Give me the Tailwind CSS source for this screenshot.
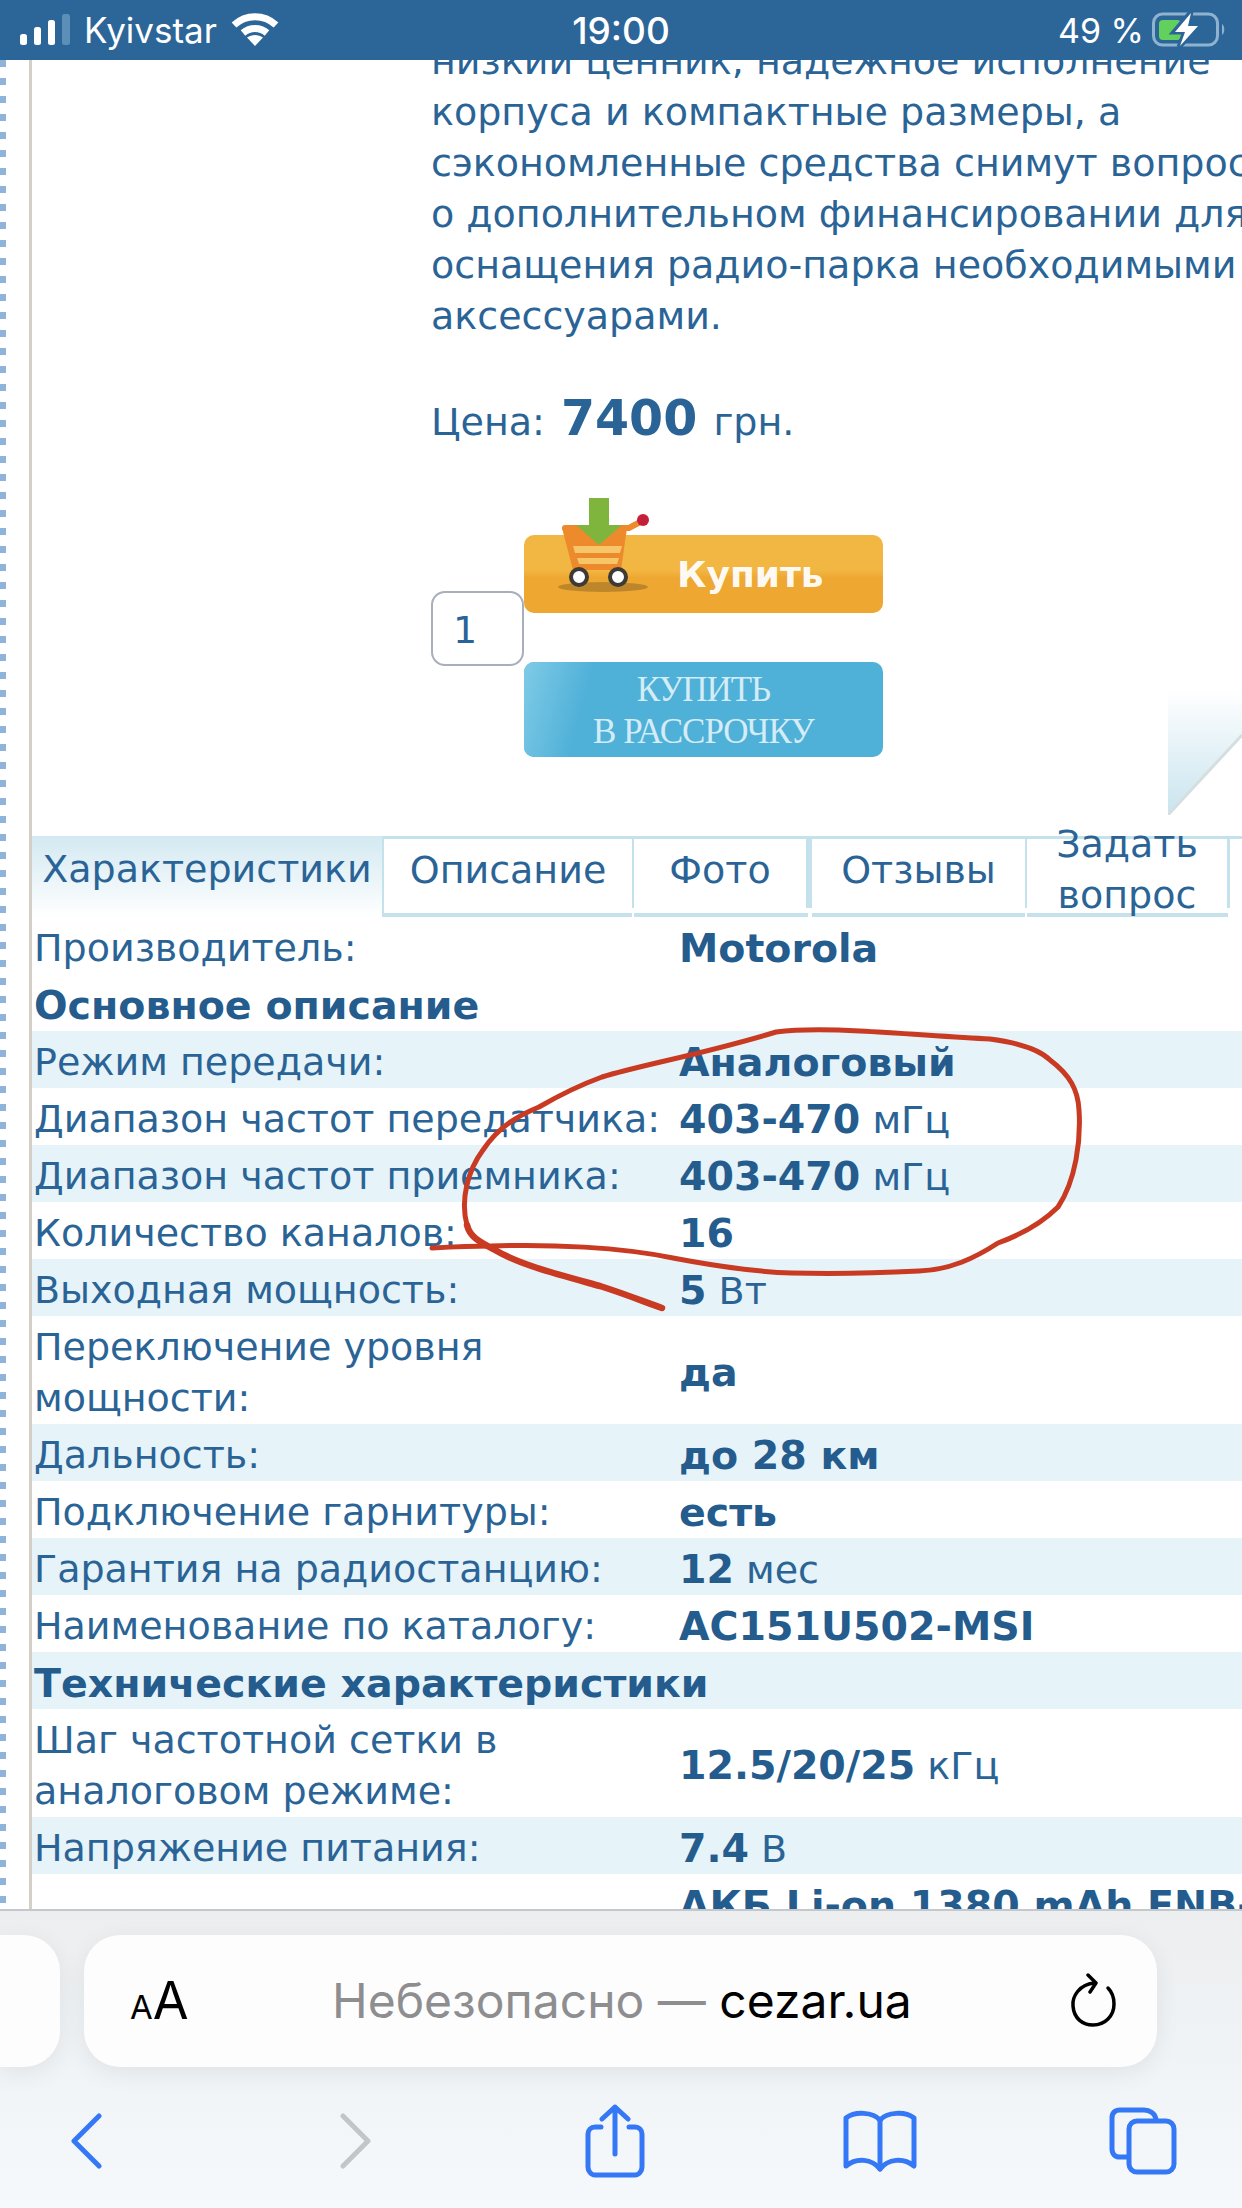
<!DOCTYPE html>
<html lang="ru">
<head>
  <meta charset="UTF-8" />
  <meta name="viewport" content="width=device-width, initial-scale=1.0" />
  <title>cezar.ua</title>
  <script src="https://cdn.jsdelivr.net/npm/@tailwindcss/browser@4"></script>
</head>

<body class="relative w-[1242px] h-[2208px] overflow-hidden flex flex-col bg-white font-['DejaVu_Sans',sans-serif] text-[38px] leading-[51px] text-[#2a6496]">

  <!-- iOS status bar -->
  <header class="h-[60px] shrink-0 bg-[#2c6698] text-white flex items-center justify-between pl-[20px] pr-[16px] font-['Inter',sans-serif] z-10">
    <div class="flex items-center w-[300px]">
      <svg width="52" height="32" viewBox="0 0 52 32" fill="#fff">
        <rect x="0" y="20" width="7" height="11" rx="2.5" />
        <rect x="14" y="13" width="7" height="18" rx="2.5" />
        <rect x="28" y="6" width="7" height="25" rx="2.5" />
        <rect x="42" y="0" width="8" height="31" rx="2.5" fill="#5c8fb8" />
      </svg>
      <span class="ml-[12px] text-[35px] leading-[40px]">Kyivstar</span>
      <svg class="ml-[14px]" width="48" height="34" viewBox="0 0 48 34" fill="none" stroke="#fff" stroke-width="7">
        <path d="M3 12C15 1 33 1 45 12" />
        <path d="M12 20C19 14 29 14 36 20" />
        <path d="M16 24.500L24 33L32 24.500C27 21 21 21 16 24.500Z" fill="#fff" stroke="none" />
      </svg>
    </div>
    <div class="text-[37px] font-medium -ml-[4px]">19:00</div>
    <div class="flex items-center justify-end w-[300px]">
      <span class="text-[34px] mr-[8px]">49 %</span>
      <svg width="74" height="36" viewBox="0 0 74 36" fill="none">
        <rect x="1.500" y="2" width="64" height="31" rx="9" stroke="#8fb3cf" stroke-width="3" />
        <path d="M70 12C73 14 73 21 70 23Z" fill="#8fb3cf" />
        <rect x="7" y="8" width="22" height="20" rx="4" fill="#62d05c" />
        <path d="M39 0L22 20H33L27 35L47 14H36Z" fill="#2c6698" stroke="#2c6698" stroke-width="5" />
        <path d="M39 1L23 20H33L28 34L46 14H36Z" fill="#fff" />
      </svg>
    </div>
  </header>

  <!-- Page -->
  <main class="flex h-[1851px] shrink-0 overflow-hidden border-b-2 border-[#c4c7cb]">
    <div class="w-[29px] shrink-0 bg-white">
      <div class="w-[6px] h-full bg-[repeating-linear-gradient(#8fb3d9_0,#8fb3d9_7px,#fff_7px,#fff_18px)]"></div>
    </div>

    <div class="flex-1 min-w-0 border-l-[3px] border-[#d4d0c8] overflow-hidden">
      <div class="-mt-[24px]">

        <!-- Product text -->
        <div class="pl-[399px] whitespace-nowrap">
          <p>
            низкий ценник, надежное исполнение<br />
            корпуса и компактные размеры, а<br />
            сэкономленные средства снимут вопрос<br />
            о дополнительном финансировании для<br />
            оснащения радио-парка необходимыми<br />
            аксессуарами.
          </p>
          <p class="mt-[51px]">Цена: <b class="text-[49px] mx-[4px]">7400</b> грн.</p>
        </div>

        <!-- Buy buttons -->
        <div class="relative h-[388px] pl-[399px] pt-[87px] flex items-start">
          <div class="w-[93px] h-[75px] mt-[56px] shrink-0 border-2 border-[#a9aebd] rounded-[14px] pl-[20px] leading-[74px]">1</div>
          <div class="w-[359px] shrink-0">
            <div class="relative h-[78px] rounded-[10px] bg-[linear-gradient(#f2b742,#f2b742_45%,#eea731_55%,#eea731)] flex items-center pl-[153px] text-[36px] font-bold text-white/95">
              Купить
              <!-- cart -->
              <svg class="absolute left-[5px] -top-[45px]" width="150" height="120" viewBox="0 0 150 120">
                <ellipse cx="74" cy="97" rx="45" ry="5" fill="#a9772a" opacity="0.7" />
                <path d="M36 38L100 38L115 30" fill="none" stroke="#ec8a2c" stroke-width="6" stroke-linecap="round" />
                <path d="M33 38H98L92 80H44Z" fill="#ec8a2c" />
                <path d="M44 56H93L91 63H46Z" fill="#f7c668" />
                <path d="M48 68H90L88 74H50Z" fill="#f7c668" />
                <circle cx="114" cy="30" r="6" fill="#c4203a" />
                <circle cx="50" cy="87" r="8" fill="#fff" stroke="#3e3a36" stroke-width="4" />
                <circle cx="89" cy="87" r="8" fill="#fff" stroke="#3e3a36" stroke-width="4" />
                <path d="M60 8H80V35H93L70 55L47 35H60Z" fill="#80b53d" />
              </svg>
            </div>
            <div class="relative mt-[49px] h-[95px] pt-[2px] rounded-[10px] bg-[#4fb0d8] overflow-hidden flex flex-col items-center justify-center font-['Liberation_Serif',serif] text-[35px] leading-[42px] tracking-[-1px] text-[#d3ecf5]">
              <div class="absolute left-0 top-0 w-[70px] h-full bg-[linear-gradient(105deg,#7fcbe6,#4fb0d8_75%)]"></div>
              <span class="relative">КУПИТЬ</span>
              <span class="relative">В РАССРОЧКУ</span>
            </div>
          </div>
          <!-- corner of a picture cut off by the right edge -->
          <svg class="absolute right-0 top-[242px]" width="74" height="125" viewBox="0 0 74 125">
            <defs>
              <linearGradient id="corner" x1="0" y1="0" x2="0" y2="1">
                <stop offset="0" stop-color="#fff" />
                <stop offset="1" stop-color="#c9e4ee" />
              </linearGradient>
            </defs>
            <path d="M0 0H74V45L0 125Z" fill="url(#corner)" />
            <path d="M0 125L74 45" stroke="#d5dfdf" stroke-width="3" />
          </svg>
        </div>

        <!-- Tabs -->
        <nav class="flex h-[81px] whitespace-nowrap">
          <div class="w-[352px] h-full border-r-2 border-[#c5e1ec] bg-[linear-gradient(#d3e9f1,#fff)] flex items-center justify-center pb-[14px]">Характеристики</div>
          <div class="w-[250px]">
            <div class="h-[72px] pb-[4px] border-r-2 border-[#c5e1ec] flex items-center justify-center bg-[linear-gradient(#c5e1ec,#c5e1ec)] bg-no-repeat bg-[0_9px] bg-[size:100%_3px]">Описание</div>
            <div class="h-[4px] mt-[5px] mr-[2px] bg-[#c5e1ec]"></div>
          </div>
          <div class="w-[178px]">
            <div class="h-[72px] pb-[4px] border-r-[6px] border-[#c5e1ec] flex items-center justify-center bg-[linear-gradient(#c5e1ec,#c5e1ec)] bg-no-repeat bg-[0_9px] bg-[size:100%_3px]">Фото</div>
            <div class="h-[4px] mt-[5px] mr-[4px] bg-[#c5e1ec]"></div>
          </div>
          <div class="w-[215px]">
            <div class="h-[72px] pb-[4px] border-r-2 border-[#c5e1ec] flex items-center justify-center bg-[linear-gradient(#c5e1ec,#c5e1ec)] bg-no-repeat bg-[0_9px] bg-[size:100%_3px]">Отзывы</div>
            <div class="h-[4px] mt-[5px] mr-[2px] bg-[#c5e1ec]"></div>
          </div>
          <div class="w-[203px]">
            <div class="h-[72px] pb-[4px] border-r-[3px] border-[#c5e1ec] flex items-center justify-center text-center bg-[linear-gradient(#c5e1ec,#c5e1ec)] bg-no-repeat bg-[0_9px] bg-[size:100%_3px]">Задать<br />вопрос</div>
            <div class="h-[4px] mt-[5px] mr-[2px] bg-[#c5e1ec]"></div>
          </div>
          <div class="flex-1 h-[72px] bg-[linear-gradient(#c5e1ec,#c5e1ec)] bg-no-repeat bg-[0_60px] bg-[size:100%_3px]"></div>
        </nav>

        <!-- Spec table -->
        <div class="whitespace-nowrap text-[#2a6496] [&_b]:text-[#255c8e] [&_b]:text-[39.5px]">
          <div class="flex h-[57px] pt-[6px] items-center pl-[2px]"><div class="w-[645px] shrink-0">Производитель:</div><div><b>Motorola</b></div></div>
          <div class="flex h-[57px] pt-[6px] items-center pl-[2px]"><b>Основное описание</b></div>
          <div class="flex h-[57px] pt-[6px] items-center pl-[2px] bg-[#e6f3f8]"><div class="w-[645px] shrink-0">Режим передачи:</div><div><b>Аналоговый</b></div></div>
          <div class="flex h-[57px] pt-[6px] items-center pl-[2px]"><div class="w-[645px] shrink-0">Диапазон частот передатчика:</div><div><b>403-470</b> мГц</div></div>
          <div class="flex h-[57px] pt-[6px] items-center pl-[2px] bg-[#e6f3f8]"><div class="w-[645px] shrink-0">Диапазон частот приемника:</div><div><b>403-470</b> мГц</div></div>
          <div class="flex h-[57px] pt-[6px] items-center pl-[2px]"><div class="w-[645px] shrink-0">Количество каналов:</div><div><b>16</b></div></div>
          <div class="flex h-[57px] pt-[6px] items-center pl-[2px] bg-[#e6f3f8]"><div class="w-[645px] shrink-0">Выходная мощность:</div><div><b>5</b> Вт</div></div>
          <div class="flex h-[108px] pt-[6px] items-center pl-[2px]"><div class="w-[645px] shrink-0">Переключение уровня<br />мощности:</div><div><b>да</b></div></div>
          <div class="flex h-[57px] pt-[6px] items-center pl-[2px] bg-[#e6f3f8]"><div class="w-[645px] shrink-0">Дальность:</div><div><b>до 28 км</b></div></div>
          <div class="flex h-[57px] pt-[6px] items-center pl-[2px]"><div class="w-[645px] shrink-0">Подключение гарнитуры:</div><div><b>есть</b></div></div>
          <div class="flex h-[57px] pt-[6px] items-center pl-[2px] bg-[#e6f3f8]"><div class="w-[645px] shrink-0">Гарантия на радиостанцию:</div><div><b>12</b> мес</div></div>
          <div class="flex h-[57px] pt-[6px] items-center pl-[2px]"><div class="w-[645px] shrink-0">Наименование по каталогу:</div><div><b>AC151U502-MSI</b></div></div>
          <div class="flex h-[57px] pt-[6px] items-center pl-[2px] bg-[#e6f3f8]"><b>Технические характеристики</b></div>
          <div class="flex h-[108px] pt-[6px] items-center pl-[2px]"><div class="w-[645px] shrink-0">Шаг частотной сетки в<br />аналоговом режиме:</div><div><b>12.5/20/25</b> кГц</div></div>
          <div class="flex h-[57px] pt-[6px] items-center pl-[2px] bg-[#e6f3f8]"><div class="w-[645px] shrink-0">Напряжение питания:</div><div><b>7.4</b> В</div></div>
          <div class="flex h-[57px] pt-[6px] items-center pl-[2px]"><div class="w-[645px] shrink-0"></div><div><b>АКБ Li-on 1380 mAh FNB-V</b></div></div>
        </div>
      </div>
    </div>
  </main>

  <!-- Safari bottom bar -->
  <footer class="flex-1 bg-[linear-gradient(#eceef0,#f0f3f5_45%,#f6f9fb)] font-['Inter',sans-serif]">
    <div class="flex gap-[24px] pt-[24px]">
      <div class="w-[60px] h-[132px] shrink-0 rounded-r-[36px] bg-[#fdfdfe] shadow-[0_6px_24px_rgba(0,0,0,0.07)]"></div>
      <div class="w-[1073px] h-[132px] rounded-[36px] bg-[#fdfdfe] shadow-[0_6px_24px_rgba(0,0,0,0.07)] flex items-center pl-[46px] pr-[40px]">
        <div class="w-[202px] flex items-baseline text-black font-normal leading-none"><span class="text-[33px]">A</span><span class="text-[52px]">A</span></div>
        <div class="text-[48px] text-[#8e8e90] leading-none whitespace-nowrap">Небезопасно — <span class="text-black">cezar.ua</span></div>
        <svg class="ml-auto" width="48" height="56" viewBox="0 0 48 56" fill="none" stroke="#000" stroke-width="3.500" stroke-linecap="round" stroke-linejoin="round">
          <path d="M26 10C10 11 3 24 4 33C5 46 14 52 24 52C36 52 45 43 45 31C45 24 43 19 39 15" />
          <path d="M19 2L27 10L21 19" />
        </svg>
      </div>
    </div>

    <div class="relative h-[100px] mt-[24px]">
      <div class="flex items-center h-[100px] text-[#3478f6] pl-[70px]">
        <svg width="32" height="56" viewBox="0 0 32 56" fill="none" stroke="currentColor" stroke-width="5" stroke-linecap="round" stroke-linejoin="round"><path d="M29 3L4 28L29 53" /></svg>
        <svg class="ml-[238px]" width="32" height="56" viewBox="0 0 32 56" fill="none" stroke="#c4c5c7" stroke-width="5" stroke-linecap="round" stroke-linejoin="round"><path d="M3 3L28 28L3 53" /></svg>
        <svg class="ml-[213px]" width="60" height="74" viewBox="0 0 60 74" fill="none" stroke="currentColor" stroke-width="5" stroke-linecap="round" stroke-linejoin="round">
          <path d="M16 23H10C6 23 3 26 3 30V63C3 67 6 71 10 71H50C54 71 57 67 57 63V30C57 26 54 23 50 23H44" />
          <path d="M30 50V3M17 15L30 3L43 15" />
        </svg>
        <svg class="ml-[198px]" width="74" height="62" viewBox="0 0 74 62" fill="none" stroke="currentColor" stroke-width="5" stroke-linecap="round" stroke-linejoin="round">
          <path d="M37 10C30 2 12 1 3 8V56C14 47 29 49 37 59C45 49 60 47 71 56V8C62 1 44 2 37 10Z" />
          <path d="M37 10V59" />
        </svg>
        <svg class="ml-[192px]" width="68" height="68" viewBox="0 0 68 68" fill="none" stroke="currentColor" stroke-width="5" stroke-linejoin="round">
          <path d="M19 50H11C6 50 3 47 3 42V11C3 6 6 3 11 3H35C40 3 47 6 47 14" />
          <rect x="20" y="14" width="45" height="51" rx="8" />
        </svg>
      </div>
    </div>
  </footer>

  <!-- Hand-drawn red circle over the screenshot -->
  <svg class="absolute left-0 top-0 pointer-events-none z-20" width="1242" height="2208" viewBox="0 0 1242 2208" fill="none" stroke="#c93a22" stroke-linecap="round" stroke-linejoin="round">
    <path d="M467 1225C460 1200 468 1170 483 1150C500 1125 520 1115 539 1107C565 1092 580 1085 602 1077C640 1065 700 1055 776 1032C800 1029 840 1030 860 1031C900 1033 950 1037 990 1039C1020 1043 1040 1050 1050 1060C1070 1075 1078 1090 1079 1110C1081 1140 1076 1180 1058 1207C1040 1225 1020 1235 998 1243C975 1258 950 1270 919 1271C880 1273 830 1274 792 1273C750 1272 710 1265 673 1258C620 1247 550 1244 491 1246C470 1246 450 1247 432 1248" stroke-width="5" />
    <path d="M467 1225C470 1238 482 1243 495 1250C520 1265 560 1275 600 1286C625 1294 645 1302 662 1308" stroke-width="6.500" />
  </svg>
</body>
</html>
